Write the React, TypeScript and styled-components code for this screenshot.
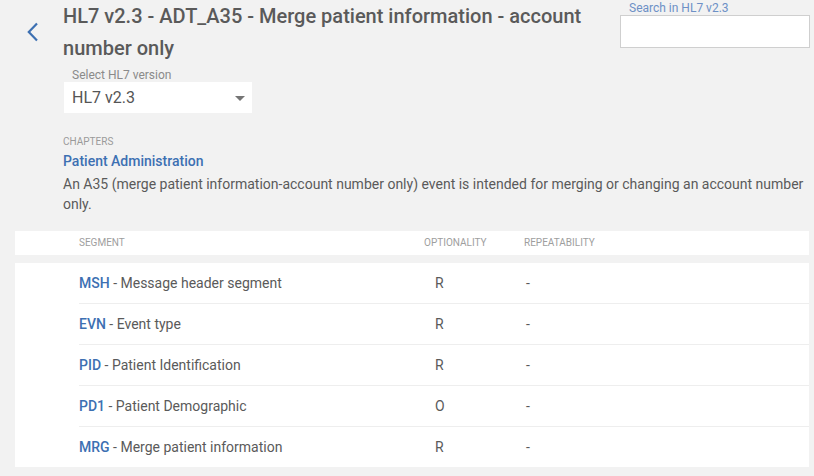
import React from "react";
import styled, { createGlobalStyle } from "styled-components";

const GlobalStyle = createGlobalStyle`
  html, body { margin: 0; padding: 0; background: #f2f2f2; }
  body { font-family: Roboto, "Liberation Sans", Arial, sans-serif; color: #555; }
  * { box-sizing: border-box; }
`;

const Page = styled.div`
  padding: 0 5px 0 15px;
  width: 814px;
`;

const Header = styled.div`
  display: flex;
  align-items: flex-start;
`;

const BackButton = styled.button`
  width: 48px;
  flex: none;
  background: none;
  border: none;
  padding: 22px 0 0 11px;
  margin: 0;
  display: flex;
  cursor: pointer;
  color: #3d70b2;
`;

const Main = styled.div`
  flex: 1;
  min-width: 0;
`;

const Title = styled.h1`
  margin: 0;
  font-size: 20px;
  line-height: 32px;
  font-weight: 500;
  color: #5a5a5a;
  max-width: 530px;
`;

const SelectField = styled.div`
  margin-top: 4px;
  margin-left: 1px;
  display: flex;
  flex-direction: column;
`;

const FieldLabel = styled.label<{ $tone?: "gray" | "blue" }>`
  font-size: 12px;
  line-height: 14px;
  color: ${(p) => (p.$tone === "blue" ? "#6d90c6" : "#8a8a8a")};
  padding-left: ${(p) => (p.$tone === "blue" ? "9px" : "8px")};
`;

const SelectBox = styled.div`
  width: 188px;
  height: 31px;
  background: #fff;
  display: flex;
  align-items: center;
  justify-content: space-between;
  padding: 0 7px 0 8px;
  font-size: 16px;
  line-height: 19px;
  color: #555;
`;

const Caret = styled.span`
  width: 0;
  height: 0;
  border-left: 5px solid transparent;
  border-right: 5px solid transparent;
  border-top: 5px solid #757575;
  margin-top: 1px;
`;

const SearchField = styled.div`
  width: 190px;
  flex: none;
  display: flex;
  flex-direction: column;
  margin: 1px -1px 0 0;
`;

const SearchInput = styled.input`
  width: 190px;
  height: 33px;
  background: #fff;
  border: 1px solid #cfcfcf;
  margin: 0;
  padding: 0 8px;
  font: inherit;
  outline: none;
`;

const Info = styled.div`
  padding-left: 48px;
  margin-top: 23px;
`;

const SmallCaps = styled.div`
  font-size: 10px;
  line-height: 12px;
  text-transform: uppercase;
  color: #9a9a9a;
`;

const ChapterLink = styled.a`
  display: block;
  margin-top: 3px;
  font-size: 14px;
  line-height: 20px;
  font-weight: 500;
  color: #3d70b2;
  text-decoration: none;
`;

const Description = styled.p`
  margin: 3px 0 0;
  font-size: 14px;
  line-height: 20px;
  color: #5a5a5a;
`;

const Table = styled.div`
  margin-top: 17px;
`;

const Columns = `
  display: grid;
  grid-template-columns: 345px 100px 1fr;
`;

const HeadRow = styled.div`
  ${Columns}
  height: 24px;
  align-items: center;
  background: #fff;
  padding-left: 64px;
`;

const HeadCell = styled.div`
  font-size: 10px;
  line-height: 12px;
  text-transform: uppercase;
  color: #9e9e9e;
`;

const Body = styled.div`
  margin-top: 8px;
  background: #fff;
  padding-left: 64px;
`;

const Row = styled.div`
  ${Columns}
  height: 41px;
  align-items: center;
  border-bottom: 1px solid #eeeeee;
  padding-bottom: 1px;
  &:last-child {
    border-bottom: none;
    height: 40px;
    padding-bottom: 0;
  }
`;

const Cell = styled.div<{ $pad?: number }>`
  font-size: 14px;
  line-height: 20px;
  color: #5a5a5a;
  padding-left: ${(p) => p.$pad ?? 0}px;
`;

const Code = styled.span`
  font-weight: 500;
  color: #3d70b2;
`;

const segments = [
  { code: "MSH", name: "Message header segment", opt: "R", rep: "-" },
  { code: "EVN", name: "Event type", opt: "R", rep: "-" },
  { code: "PID", name: "Patient Identification", opt: "R", rep: "-" },
  { code: "PD1", name: "Patient Demographic", opt: "O", rep: "-" },
  { code: "MRG", name: "Merge patient information", opt: "R", rep: "-" },
];

export default function App() {
  return (
    <>
      <GlobalStyle />
      <Page>
        <Header>
          <BackButton aria-label="Back">
            <svg width="14" height="20" viewBox="0 0 14 20" fill="none">
              <path d="M11 1.5 L2.8 10 L11 18.5" stroke="currentColor" strokeWidth="2.2" />
            </svg>
          </BackButton>
          <Main>
            <Title>HL7 v2.3 - ADT_A35 - Merge patient information - account number only</Title>
            <SelectField>
              <FieldLabel>Select HL7 version</FieldLabel>
              <SelectBox>
                HL7 v2.3
                <Caret />
              </SelectBox>
            </SelectField>
          </Main>
          <SearchField>
            <FieldLabel $tone="blue">Search in HL7 v2.3</FieldLabel>
            <SearchInput />
          </SearchField>
        </Header>
        <Info>
          <SmallCaps>Chapters</SmallCaps>
          <ChapterLink href="#">Patient Administration</ChapterLink>
          <Description>
            An A35 (merge patient information-account number only) event is intended for merging or changing an account number only.
          </Description>
        </Info>
        <Table>
          <HeadRow>
            <HeadCell>Segment</HeadCell>
            <HeadCell>Optionality</HeadCell>
            <HeadCell>Repeatability</HeadCell>
          </HeadRow>
          <Body>
            {segments.map((s) => (
              <Row key={s.code}>
                <Cell>
                  <Code>{s.code}</Code> - {s.name}
                </Cell>
                <Cell $pad={11}>{s.opt}</Cell>
                <Cell $pad={2}>{s.rep}</Cell>
              </Row>
            ))}
          </Body>
        </Table>
      </Page>
    </>
  );
}
